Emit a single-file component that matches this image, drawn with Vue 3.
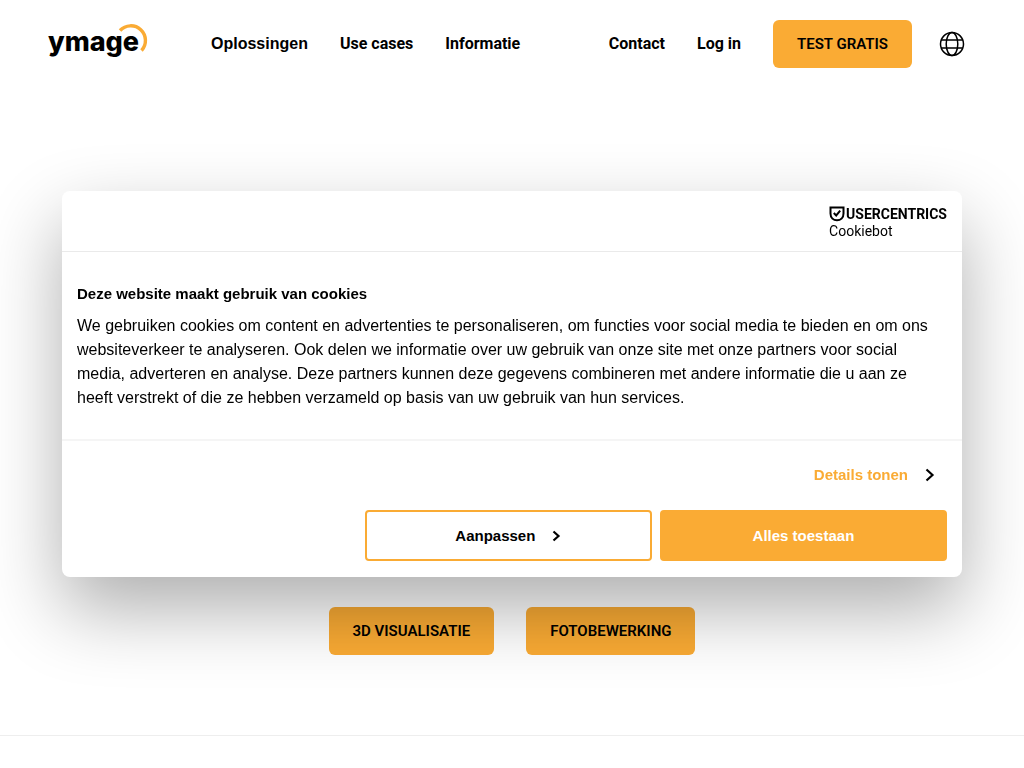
<script setup>
const mainLinks = ['Oplossingen', 'Use cases', 'Informatie']
const sideLinks = ['Contact', 'Log in']
</script>

<template>
  <div class="page">
    <header class="header">
      <a class="logo" href="#" aria-label="ymage">
        <span>ymage</span>
        <svg width="32" height="32" viewBox="0 0 32 32" fill="none" aria-hidden="true">
          <path d="M4 8.500A14.500 14.500 0 1 1 25.500 28.500" stroke="#faab34" stroke-width="3.400" />
        </svg>
      </a>
      <nav class="nav main">
        <a v-for="link in mainLinks" :key="link" href="#">{{ link }}</a>
      </nav>
      <nav class="nav side">
        <a v-for="link in sideLinks" :key="link" href="#">{{ link }}</a>
        <a class="cta" href="#">TEST GRATIS</a>
      </nav>
      <button class="globe" type="button" aria-label="Taal">
        <svg width="26" height="26" viewBox="0 0 26 26" fill="none" stroke="#000" stroke-width="1.500">
          <circle cx="13" cy="13" r="11.500" />
          <ellipse cx="13" cy="13" rx="5.800" ry="11.500" />
          <path d="M2.300 9H23.700M2.300 17H23.700" />
        </svg>
      </button>
    </header>

    <main class="hero">
      <a class="cta" href="#">3D VISUALISATIE</a>
      <a class="cta" href="#">FOTOBEWERKING</a>
    </main>

    <div class="overlay">
      <section class="dialog" role="dialog" aria-labelledby="cookie-title">
        <div class="brand">
          <a href="#" class="brand-link">
            <span class="brand-top">
              <svg width="16" height="16" viewBox="0 0 16 16" fill="none" stroke="#000" aria-hidden="true">
                <path d="M1.500 1.500H14.500V7.500C14.500 12 11.500 14.300 8 14.300C4.500 14.300 1.500 12 1.500 7.500Z" stroke-width="2" />
                <path d="M4.800 7L7.200 9.500L11.200 4.600" stroke-width="2" />
              </svg>
              <strong>USERCENTRICS</strong>
            </span>
            <span class="brand-sub">Cookiebot</span>
          </a>
        </div>
        <div class="copy">
          <h2 id="cookie-title">Deze website maakt gebruik van cookies</h2>
          <p>We gebruiken cookies om content en advertenties te personaliseren, om functies voor social media te bieden en om ons websiteverkeer te analyseren. Ook delen we informatie over uw gebruik van onze site met onze partners voor social media, adverteren en analyse. Deze partners kunnen deze gegevens combineren met andere informatie die u aan ze heeft verstrekt of die ze hebben verzameld op basis van uw gebruik van hun services.</p>
        </div>
        <div class="footer">
          <a class="details" href="#">Details tonen
            <svg width="10" height="14" viewBox="0 0 10 14" fill="none" stroke="#000" stroke-width="2.200" aria-hidden="true"><path d="M1.500 1.500L7.500 7L1.500 12.500" /></svg>
          </a>
          <div class="actions">
            <button class="outline" type="button">Aanpassen
              <svg width="9" height="12" viewBox="0 0 9 12" fill="none" stroke="#000" stroke-width="2.200" aria-hidden="true"><path d="M1.500 1.500L6.500 6L1.500 10.500" /></svg>
            </button>
            <button class="solid" type="button">Alles toestaan</button>
          </div>
        </div>
      </section>
    </div>
  </div>
</template>

<style>
body {
  margin: 0;
  background: #fff;
}
</style>

<style scoped>
.page {
  min-height: 100vh;
  color: #000;
  font-family: Roboto, "Liberation Sans", sans-serif;
}
a {
  color: inherit;
  text-decoration: none;
}
button {
  font: inherit;
  color: inherit;
  cursor: pointer;
}
svg {
  display: block;
  flex: none;
}
.header {
  display: flex;
  align-items: center;
  height: 87px;
  padding: 0 59px 0 48px;
}
.logo {
  position: relative;
  width: 100px;
  margin-right: 63px;
  padding-bottom: 4px;
  font-family: Inter, sans-serif;
  font-size: 27px;
  font-weight: 800;
  line-height: 36px;
}
.logo svg {
  position: absolute;
  top: -2px;
  right: 0;
}
.nav {
  display: flex;
  align-items: center;
  gap: 32px;
  font-size: 16px;
  font-weight: 700;
  line-height: 24px;
  white-space: nowrap;
}
.main a:first-child {
  font-family: "Liberation Sans", sans-serif;
}
.side {
  margin-left: auto;
}
.cta {
  padding: 0 24px;
  border-radius: 6px;
  background: #faab34;
  font-size: 15px;
  font-weight: 600;
  line-height: 48px;
}
.globe {
  margin-left: 27px;
  padding: 0;
  border: 0;
  background: none;
}
.hero {
  display: flex;
  align-items: flex-end;
  justify-content: center;
  gap: 32px;
  height: 568px;
  padding-bottom: 80px;
  border-bottom: 1px solid #eee;
}
.overlay {
  position: fixed;
  inset: 0;
  display: flex;
  align-items: center;
  justify-content: center;
  padding: 0 62px;
  font-family: "Liberation Sans", sans-serif;
}
.dialog {
  width: 100%;
  max-width: 900px;
  border-radius: 8px;
  background: #fff;
  box-shadow: 0 32px 76px rgba(0, 0, 0, 0.32);
}
.brand {
  display: flex;
  justify-content: flex-end;
  padding: 14px 15px 11px;
  border-bottom: 1px solid #eaeaea;
}
.brand-link {
  font-family: "Liberation Sans Narrow", Roboto, sans-serif;
}
.brand-top {
  display: flex;
  align-items: center;
  gap: 1px;
  font-size: 14px;
  line-height: 18px;
}
.brand-sub {
  display: block;
  font-size: 14px;
  line-height: 17px;
}
.copy {
  padding: 30px 24px 29px 15px;
  border-bottom: 2px solid #f5f5f5;
  font-size: 16px;
  line-height: 24px;
}
h2 {
  margin: 0 0 8px;
  font-size: 15px;
  line-height: 24px;
}
p {
  margin: 0;
}
.footer {
  padding: 22px 15px 16px;
  font-size: 15px;
  font-weight: 700;
}
.details {
  display: flex;
  align-items: center;
  justify-content: flex-end;
  gap: 17px;
  padding-right: 12px;
  color: #faab34;
  line-height: 24px;
}
.actions {
  display: grid;
  grid-template-columns: 33% 33%;
  justify-content: end;
  gap: 8px;
  margin-top: 23px;
}
.actions button {
  display: flex;
  align-items: center;
  justify-content: center;
  gap: 17px;
  height: 51px;
  border: 2px solid #faab34;
  border-radius: 4px;
  background: #fff;
}
.actions .solid {
  background: #faab34;
  color: #fff;
}
</style>
